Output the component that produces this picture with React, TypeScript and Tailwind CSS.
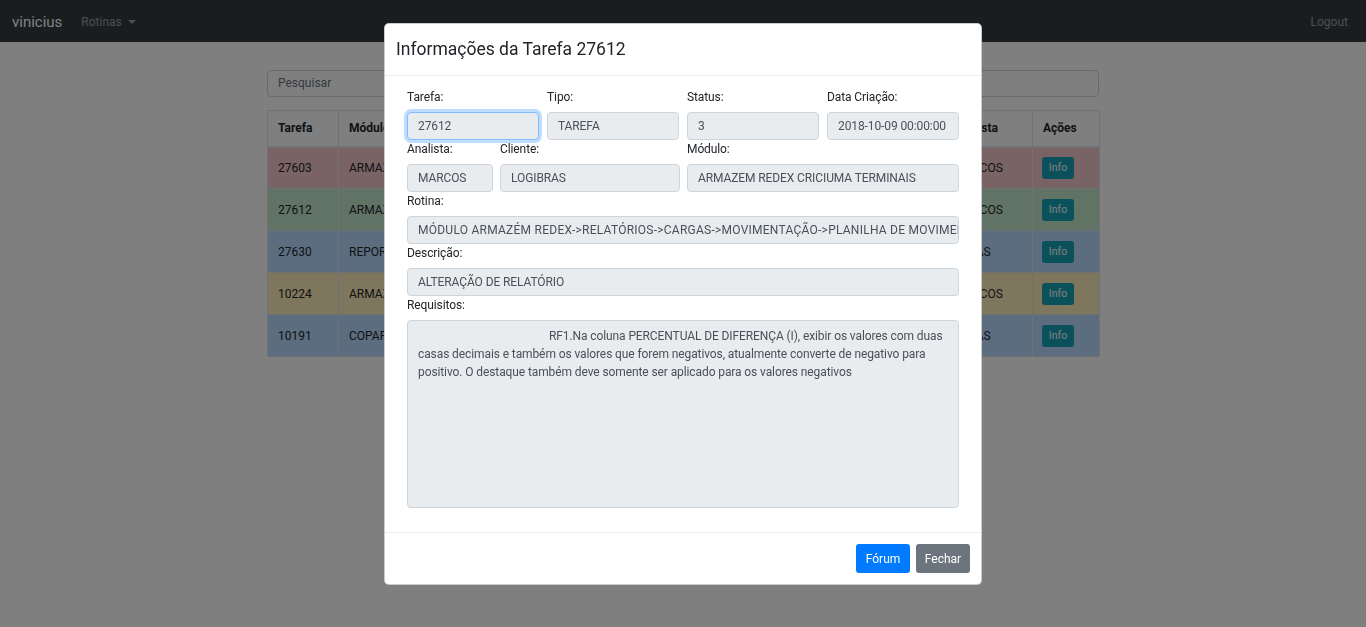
const rows = [
  { id: '27603', modulo: 'ARMAZEM REDEX', rotina: 'RELATÓRIOS', desc: 'AJUSTE', analista: 'MARCOS', bg: 'bg-[#f5c6cb]' },
  { id: '27612', modulo: 'ARMAZEM REDEX', rotina: 'RELATÓRIOS', desc: 'ALTERAÇÃO', analista: 'MARCOS', bg: 'bg-[#c3e6cb]' },
  { id: '27630', modulo: 'REPORT', rotina: 'CARGAS', desc: 'AJUSTE', analista: 'LUCAS', bg: 'bg-[#b8daff]' },
  { id: '10224', modulo: 'ARMAZEM REDEX', rotina: 'CARGAS', desc: 'AJUSTE', analista: 'MARCOS', bg: 'bg-[#ffeeba]' },
  { id: '10191', modulo: 'COPARTE', rotina: 'CARGAS', desc: 'AJUSTE', analista: 'LUCAS', bg: 'bg-[#b8daff]' }
]

const font = { fontFamily: 'Roboto, "Open Sans", sans-serif' }

function Field({ label, value, focus, wide }: { label: string; value: string; focus?: boolean; wide?: boolean }) {
  return (
    <div className="min-w-0">
      <div className="h-[18px] leading-[18px] text-[12px] tracking-[-0.1px] text-[#212529]">{label}</div>
      <div
        className={`mt-[6px] h-[28px] leading-[26px] px-[10px] rounded-[4px] border bg-[#e9ecef] text-[12px] text-[#495057] whitespace-nowrap overflow-hidden ${
          wide ? 'tracking-[0.25px]' : 'tracking-[-0.1px]'
        } ${focus ? 'border-[#80bdff] shadow-[0_0_0_3px_rgba(0,123,255,0.25)]' : 'border-[#ced4da]'}`}
      >
        {value}
      </div>
    </div>
  )
}

export default function App() {
  return (
    <div className="relative min-h-[627px] bg-white" style={font}>
      <nav className="h-[42px] bg-[#343a40] flex items-center pl-[12px] pr-[18px] pt-[2px]">
        <span className="text-[15px] text-white">vinicius</span>
        <span className="ml-[19px] text-[12px] text-white/50 flex items-center gap-[6px]">
          Rotinas
          <span className="w-0 h-0 border-l-[4px] border-r-[4px] border-t-[4px] border-l-transparent border-r-transparent border-t-white/50" />
        </span>
        <span className="ml-auto text-[12px] text-white/50">Logout</span>
      </nav>

      <div className="w-[832px] mx-auto pt-[28px]">
        <div className="h-[27px] rounded-[4px] border border-[#ced4da] px-[10px] leading-[25px] text-[12px] text-[#6c757d]">
          Pesquisar
        </div>
        <table className="mt-[13px] w-full table-fixed border-collapse text-[12px] text-[#212529]">
          <colgroup>
            <col className="w-[71px]" />
            <col className="w-[200px]" />
            <col className="w-[205px]" />
            <col className="w-[200px]" />
            <col className="w-[89px]" />
            <col className="w-[67px]" />
          </colgroup>
          <thead>
            <tr className="h-[36px]">
              {['Tarefa', 'Módulo', 'Rotina', 'Descrição', 'Analista', 'Ações'].map((h) => (
                <th key={h} className="border border-[#dee2e6] border-b-2 px-[10px] text-left font-bold">
                  {h}
                </th>
              ))}
            </tr>
          </thead>
          <tbody>
            {rows.map((r) => (
              <tr key={r.id} className={`h-[42px] ${r.bg}`}>
                <td className="border border-[#dee2e6] px-[10px] whitespace-nowrap overflow-hidden">{r.id}</td>
                <td className="border border-[#dee2e6] px-[10px] whitespace-nowrap overflow-hidden">{r.modulo}</td>
                <td className="border border-[#dee2e6] px-[10px] whitespace-nowrap overflow-hidden">{r.rotina}</td>
                <td className="border border-[#dee2e6] px-[10px] whitespace-nowrap overflow-hidden">{r.desc}</td>
                <td className="border border-[#dee2e6] px-[10px] whitespace-nowrap overflow-hidden">{r.analista}</td>
                <td className="border border-[#dee2e6] px-[9px]">
                  <span className="inline-flex h-[22px] w-[32px] items-center justify-center rounded-[3px] bg-[#17a2b8] text-[10.5px] text-white">
                    Info
                  </span>
                </td>
              </tr>
            ))}
          </tbody>
        </table>
      </div>

      <div className="fixed inset-0 bg-black/50 flex justify-center items-start">
        <div className="mt-[23px] w-[598px] rounded-[5px] border border-black/20 bg-white">
          <div className="h-[52px] flex items-center px-[11px] border-b border-[#e9ecef]">
            <h5 className="text-[17.5px] text-[#212529]">Informações da Tarefa 27612</h5>
          </div>
          <div className="px-[22px] pt-[12px] pb-[24px]">
            <div className="grid grid-cols-4 gap-x-[8px]">
              <Field label="Tarefa:" value="27612" focus />
              <Field label="Tipo:" value="TAREFA" />
              <Field label="Status:" value="3" />
              <Field label="Data Criação:" value="2018-10-09 00:00:00" />
            </div>
            <div className="grid grid-cols-[86px_180px_1fr] gap-x-[7px]">
              <Field label="Analista:" value="MARCOS" />
              <Field label="Cliente:" value="LOGIBRAS" />
              <Field label="Módulo:" value="ARMAZEM REDEX CRICIUMA TERMINAIS" />
            </div>
            <Field label="Rotina:" value="MÓDULO ARMAZÉM REDEX->RELATÓRIOS->CARGAS->MOVIMENTAÇÃO->PLANILHA DE MOVIMENTAÇÃO" wide />
            <Field label="Descrição:" value="ALTERAÇÃO DE RELATÓRIO" />
            <div className="h-[18px] leading-[18px] text-[12px] tracking-[-0.1px] text-[#212529]">Requisitos:</div>
            <div className="mt-[6px] h-[188px] rounded-[4px] border border-[#ced4da] bg-[#e9ecef] px-[10px] pt-[6px] text-[12px] tracking-[-0.1px] leading-[18px] text-[#495057] indent-[131px]">
              RF1.Na coluna PERCENTUAL DE DIFERENÇA (I), exibir os valores com duas casas decimais e também os valores que forem negativos, atualmente converte de negativo para positivo. O destaque também deve somente ser aplicado para os valores negativos
            </div>
          </div>
          <div className="h-[52px] border-t border-[#e9ecef] flex items-center justify-end gap-[6px] px-[11px]">
            <button className="h-[29px] w-[54px] rounded-[3px] bg-[#007bff] text-[12px] text-white">Fórum</button>
            <button className="h-[29px] w-[54px] rounded-[3px] bg-[#6c757d] text-[12px] text-white">Fechar</button>
          </div>
        </div>
      </div>
    </div>
  )
}
